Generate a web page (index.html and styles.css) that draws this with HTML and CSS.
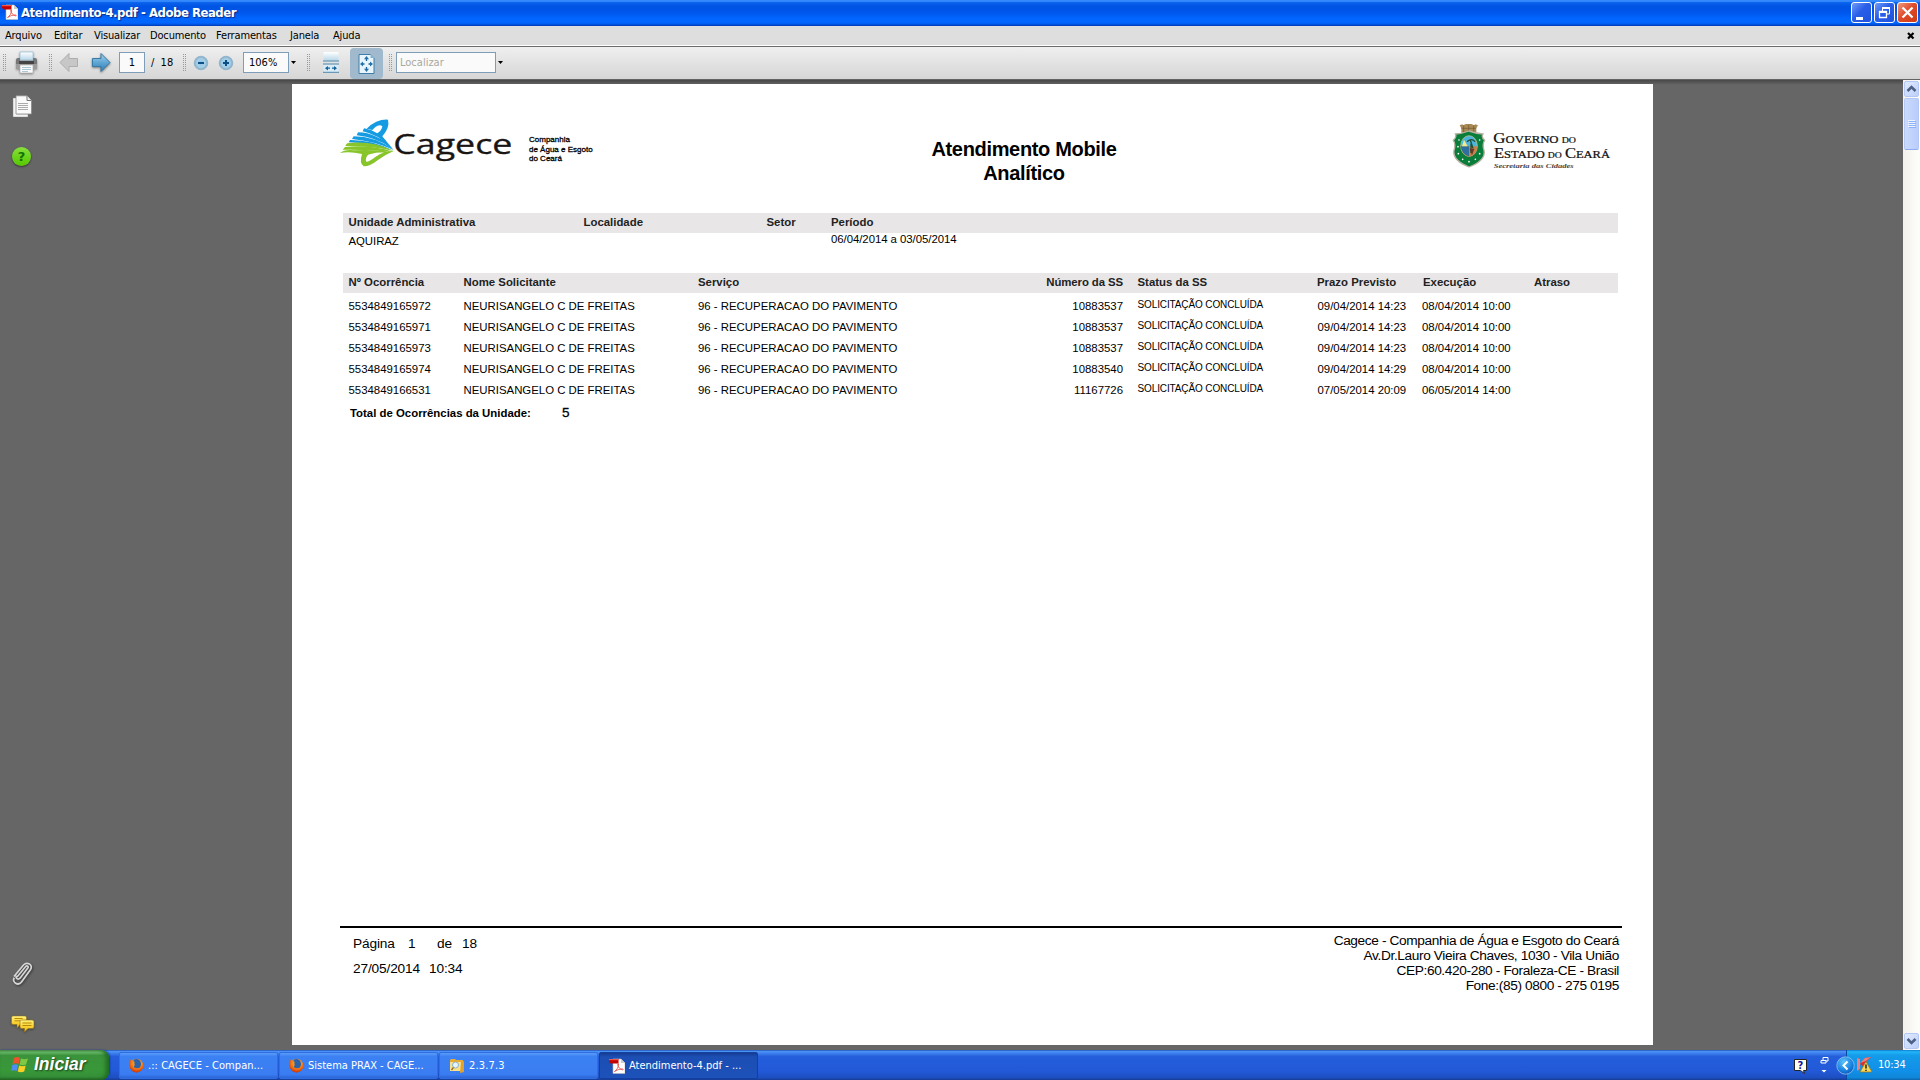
FILE: index.html
```html
<!DOCTYPE html>
<html lang="pt-BR">
<head>
<meta charset="utf-8">
<title>Atendimento-4.pdf - Adobe Reader</title>
<link rel="stylesheet" href="styles.css">
</head>
<body>
<svg width="0" height="0" class="defs">
  <defs>
    <linearGradient id="arrow" x1="0" y1="0" x2="0" y2="1"><stop offset="0" stop-color="#a9d3ec"/><stop offset=".5" stop-color="#5fa6d3"/><stop offset="1" stop-color="#2f7db4"/></linearGradient>
    <linearGradient id="paper" x1="0" y1="0" x2="0" y2="1"><stop offset="0" stop-color="#fff"/><stop offset="1" stop-color="#b9d7e8"/></linearGradient>
    <radialGradient id="zoomball" cx=".5" cy=".5" r=".5"><stop offset="0" stop-color="#8cc4e8"/><stop offset=".6" stop-color="#a8d0e8"/><stop offset="1" stop-color="#7fa9c4"/></radialGradient>
    <linearGradient id="note" x1="0" y1="0" x2="0" y2="1"><stop offset="0" stop-color="#fff27a"/><stop offset="1" stop-color="#f4b400"/></linearGradient>
    <radialGradient id="fox" cx=".55" cy=".3" r=".7"><stop offset="0" stop-color="#ffc23a"/><stop offset=".6" stop-color="#f37a16"/><stop offset="1" stop-color="#c93409"/></radialGradient>
    <radialGradient id="trayball" cx=".4" cy=".3" r=".8"><stop offset="0" stop-color="#5cc4fb"/><stop offset=".6" stop-color="#1a83e0"/><stop offset="1" stop-color="#0a4bb0"/></radialGradient>
    <symbol id="pdf" viewBox="0 0 16 16"><path d="M4 1h8l4 4v10.500H4z" fill="#fff" stroke="#bbb" stroke-width=".6"/><path d="M12 1v4h4z" fill="#ccc"/><path d="M5.500 13.500c2-1 4.500-5 4-7.500-.8-1-1.300.6 0 2.800s3.500 3.500 4.700 2.900c.7-1.300-4.500-1-8.700 1.800z" fill="none" stroke="#e8625c"/><path d="M0 1h9.500v4.500H2L0 4z" fill="#c40000"/><path d="M0 1h9.500v1.200H0z" fill="#ee5a50"/></symbol>
    <symbol id="firefox" viewBox="0 0 15 15"><circle cx="7.500" cy="7.500" r="6.800" fill="url(#fox)"/><path d="M5 1.500c3-1.500 7 .3 7 4.500 0 3-2 4.500-4 4.500S4 9 4 7l2-1-2-1.500z" fill="#2b62a8"/><path d="M1 3l1-2 2 2.200 2 .8-1.500 1.500L6 7C4 8 5 10.500 8 10.500c3.500 0 5-3 5.500-6C16 10 12 14.500 7.500 14.500 2 14.500-.5 9 1 3z" fill="url(#fox)"/></symbol>
  </defs>
</svg>
<div class="screen">
  <header class="titlebar">
    <svg class="title-icon" width="16" height="16"><use href="#pdf"/></svg>
    <h1 class="title"><span>Atendimento-4.pdf - Adobe Reader</span></h1>
    <div class="window-buttons">
      <button class="wb"><svg width="21" height="21"><path d="M5 15h7v3H5z" fill="#fff"/></svg></button>
      <button class="wb"><svg width="21" height="21"><path d="M8.500 9V5.500h7V12H13" fill="none" stroke="#fff"/><path d="M8 5h8v2H8z" fill="#fff"/><path d="M5.500 9.500h7v6h-7z" fill="none" stroke="#fff" stroke-width="1.300"/><path d="M5 9h8v2H5z" fill="#fff"/></svg></button>
      <button class="wb close"><svg width="21" height="21"><path d="M5.500 5.500l10 10m0-10l-10 10" stroke="#fff" stroke-width="2.300"/></svg></button>
    </div>
  </header>
  <nav class="menubar">
    <span class="m1">Arquivo</span><span class="m2">Editar</span><span class="m3">Visualizar</span><span class="m4">Documento</span><span class="m5">Ferramentas</span><span class="m6">Janela</span><span class="m7">Ajuda</span>
    <svg class="menu-close" width="8" height="8"><path d="M1 1l5.500 5.500m0-5.500L1 6.500" stroke="#000" stroke-width="2.200"/></svg>
  </nav>
  <div class="toolbar">
    <i class="grip"></i>
    <svg class="print" width="23" height="24" viewBox="0 0 23 24"><path d="M5 1h13v8H5z" fill="url(#paper)" stroke="#9fc3d8" stroke-width=".8"/><path d="M1 9q0-2 2-2h2v3h13V7h2q2 0 2 2v9H1z" fill="#777"/><path d="M1 13h21v5H1z" fill="#9b9b9b"/><path d="M4 10h15v3H4z" fill="#444"/><path d="M5 14h13v8H5z" fill="#fafafa" stroke="#aaa" stroke-width=".6"/><path d="M7 16.500h9M7 18.500h9M7 20.500h6" stroke="#a9c6d6"/></svg>
    <i class="grip"></i>
    <svg class="back" width="20" height="21" viewBox="0 0 20 21"><path d="M1 10.500L10 1.500v5h8.500v8H10v5z" fill="#c7c7c7" stroke="#adadad"/></svg>
    <svg class="forward" width="20" height="21" viewBox="0 0 20 21"><path d="M19 10.500L10 1.500v5H1.500v8H10v5z" fill="url(#arrow)" stroke="#367aa8"/></svg>
    <span class="field page-number">1</span>
    <span class="page-count">/&nbsp; 18</span>
    <i class="grip"></i>
    <svg class="minus" width="16" height="16"><circle cx="8" cy="8" r="6.800" fill="url(#zoomball)" stroke="#8fb0c6" stroke-width=".8"/><path d="M5 7h6v2H5z" fill="#0d4f87"/></svg>
    <svg class="plus" width="16" height="16"><circle cx="8" cy="8" r="6.800" fill="url(#zoomball)" stroke="#8fb0c6" stroke-width=".8"/><path d="M5 7h2V5h2v2h2v2H9v2H7V9H5z" fill="#0d4f87"/></svg>
    <span class="field zoom">106%</span>
    <i class="caret"></i>
    <i class="grip"></i>
    <svg class="fit-width" width="16" height="21" viewBox="0 0 16 21"><path d="M.5 0h15v8.500H.5z" fill="url(#paper)"/><path d="M0 9h16" stroke="#4d87ad"/><path d="M.5 12.500h15V20H.5z" fill="#d9ebf5"/><path d="M0 12h16M0 20.300h16" stroke="#4d87ad"/><path d="M3 16.200h4m2 0h4" stroke="#15639c" stroke-width="1.300"/><path d="M5 14L2 16.200 5 18.500zM11 14l3 2.200-3 2.300z" fill="#15639c"/></svg>
    <span class="pressed"><svg width="17" height="20" viewBox="0 0 17 20"><path d="M1 .5h11.500L16 4v15.500H1z" fill="#e9f5fc" stroke="#3f7ea8"/><path d="M12.500 0v4H17" fill="#84b3d0"/><path d="M8.500 4v3m0 6v3M3.500 10h3m4 0h3" stroke="#15639c" stroke-width="1.300"/><path d="M6 5.200L8.500 2 11 5.200zM6 14.800L8.500 18l2.500-3.200zM5 7.500L2 10l3 2.500zM12 7.500l3 2.500-3 2.500z" fill="#2471a8"/></svg></span>
    <i class="grip"></i>
    <span class="field search">Localizar</span>
    <i class="caret"></i>
  </div>
  <main class="workspace">
    <aside class="sidebar">
      <svg class="pages" width="22" height="24" viewBox="0 0 22 24"><path d="M1 3h4v16h11v3H1z" fill="#f4f4f4" stroke="#777" stroke-width=".4"/><path d="M4 .8h11l4.500 4.700V19H4z" fill="#fafafa" stroke="#888" stroke-width=".8"/><path d="M15 .8v4.700h4.500" fill="#eee" stroke="#777"/><path d="M6 8.500h10M6 10.500h10M6 12.500h10M6 14.500h10" stroke="#aaa"/></svg>
      <span class="help">?</span>
      <svg class="clip" width="22" height="24" viewBox="0 0 22 24"><path d="M5 15L13.500 4.700c1.500-1.700 3.500-.2 2.300 1.400L8 16.200c-2 2-5 0-3.300-2.500M2 14.500L11.500 3C15-.5 21.500 2.500 18.500 7.500L9.500 20C6 24.500-.5 20 2.300 15.800" fill="none" stroke="#d7d7d7" stroke-width="1.700"/></svg>
      <svg class="notes" width="24" height="18" viewBox="0 0 24 18"><path d="M2 1h12q1.500 0 1.500 1.500V8q0 1.500-1.500 1.500H9L6 13V9.500H2Q.5 9.500.5 8V2.500Q.5 1 2 1z" fill="url(#note)" stroke="#8c7220" stroke-width=".5"/><path d="M3.500 3.500h8m-8 2.300h6" stroke="#b98900"/><path d="M10.500 5H21q2 0 2 1.500v5.500q0 1.500-2 1.500h-4L13.500 17v-3.500h-3Q9 13.500 9 12V6.500Q9 5 10.500 5z" fill="url(#note)" stroke="#8c7220" stroke-width=".6"/><path d="M11.500 8h9m-9 2.500h9" stroke="#b98900"/></svg>
    </aside>
    <article class="page">
      <div class="page-head">
        <svg class="cagece" width="173" height="52" viewBox="30 52 519 156" role="img">
          <g fill="#159be2">
            <path d="M110 84Q140 55 174 57Q180 80 157 107Q170 128 191 148Q163 133 140 99Q156 90 157 77Q149 69 136 79L127 88z"/>
            <path d="M102 83Q145 88 182 137Q140 101 98 92z"/>
            <path d="M84 95Q140 96 187 143Q135 109 80 104z"/>
            <path d="M71 107Q135 107 190 147Q130 121 66 115z"/>
            <path d="M60 118Q125 117 188 149Q125 127 56 125z"/>
          </g>
          <g fill="#88c52a">
            <path d="M51 128Q125 118 191 151Q120 135 46 136z"/>
            <path d="M45 139Q120 130 189 153Q115 147 62 147L38 147z"/>
            <path d="M30 157Q44 145 74 149Q140 146 185 155Q140 153 114 162Q104 175 109 183Q116 184 137 168Q160 151 191 151Q168 161 145 177Q118 198 101 197Q87 188 96 160Q58 151 30 157z"/>
          </g>
          <text x="190" y="159" textLength="357" lengthAdjust="spacingAndGlyphs" class="brand">Cagece</text>
        </svg>
        <p class="company">Companhia<br>de Água e Esgoto<br>do Ceará</p>
        <h2 class="report-title">Atendimento Mobile<br>Analítico</h2>
        <svg class="gov" width="160" height="50" viewBox="95 65 480 150" role="img">
          <path d="M118 75l8-3 3 3 7-4 9 0 9 0 7 4 4-3 8 3-5 9v13h-45V84z" fill="#a98a55"/><path d="M123 84h44M130 75v20m15-22v22m15-20v20" stroke="#6e5733" stroke-width="2"/>
          <path d="M105 101Q125 100 146 92Q168 100 188 101Q182 110 193 120Q185 130 191 150Q197 180 146 200Q96 180 101 150Q107 130 99 120Q110 110 105 101z" fill="#0a7d3b" stroke="#b8b2a2" stroke-width="4"/>
          <ellipse cx="146" cy="137" rx="25" ry="31" fill="#49b5df" stroke="#d5c98a" stroke-width="2"/>
          <path d="M121 138h50q-2 30-25 31q-22-3-25-31z" fill="#c8824b"/><path d="M121 138h25v30q-20-3-25-30z" fill="#2d6f9d"/><path d="M150 119l8 25m-18-20q14-12 24 0m-12 6v28" stroke="#254e2d" stroke-width="4" fill="none"/><path d="M131 118l11 20h-17z" fill="#f5e98a"/><path d="M148 145l14 0-7 20z" fill="#68372b"/>
          <g fill="#fff"><circle cx="116" cy="119" r="2.500"/><circle cx="113" cy="139" r="2.500"/><circle cx="114" cy="160" r="2.500"/><circle cx="127" cy="177" r="2.500"/><circle cx="146" cy="184" r="2.500"/><circle cx="165" cy="177" r="2.500"/><circle cx="178" cy="160" r="2.500"/><circle cx="178" cy="119" r="2.500"/></g>
          <g class="gov-text"><text x="219" y="129" textLength="248" lengthAdjust="spacingAndGlyphs"><tspan class="cap">G</tspan>OVERNO <tspan class="mini">DO</tspan></text>
          <text x="221" y="172" textLength="348" lengthAdjust="spacingAndGlyphs"><tspan class="cap">E</tspan>STADO <tspan class="mini">DO</tspan> <tspan class="cap">C</tspan>EARÁ</text></g>
          <text x="220" y="204" textLength="240" lengthAdjust="spacingAndGlyphs" class="office">Secretaria das Cidades</text>
        </svg>
      </div>
      <div class="band unit-cols"><span>Unidade Administrativa</span><span>Localidade</span><span>Setor</span><span>Período</span></div>
      <div class="unit-cols unit-values"><span>AQUIRAZ</span><span></span><span></span><span class="period">06/04/2014 a 03/05/2014</span></div>
      <div class="band cols"><span>Nº Ocorrência</span><span>Nome Solicitante</span><span>Serviço</span><span class="right">Número da SS</span><span class="status-head">Status da SS</span><span>Prazo Previsto</span><span class="exec-head">Execução</span><span>Atraso</span></div>
      <div class="rows">
        <div class="cols"><span>5534849165972</span><span>NEURISANGELO C DE FREITAS</span><span class="service">96 - RECUPERACAO DO PAVIMENTO</span><span class="right">10883537</span><span class="status">SOLICITAÇÃO CONCLUÍDA</span><span class="due">09/04/2014 14:23</span><span>08/04/2014 10:00</span></div>
        <div class="cols"><span>5534849165971</span><span>NEURISANGELO C DE FREITAS</span><span class="service">96 - RECUPERACAO DO PAVIMENTO</span><span class="right">10883537</span><span class="status">SOLICITAÇÃO CONCLUÍDA</span><span class="due">09/04/2014 14:23</span><span>08/04/2014 10:00</span></div>
        <div class="cols"><span>5534849165973</span><span>NEURISANGELO C DE FREITAS</span><span class="service">96 - RECUPERACAO DO PAVIMENTO</span><span class="right">10883537</span><span class="status">SOLICITAÇÃO CONCLUÍDA</span><span class="due">09/04/2014 14:23</span><span>08/04/2014 10:00</span></div>
        <div class="cols"><span>5534849165974</span><span>NEURISANGELO C DE FREITAS</span><span class="service">96 - RECUPERACAO DO PAVIMENTO</span><span class="right">10883540</span><span class="status">SOLICITAÇÃO CONCLUÍDA</span><span class="due">09/04/2014 14:29</span><span>08/04/2014 10:00</span></div>
        <div class="cols"><span>5534849166531</span><span>NEURISANGELO C DE FREITAS</span><span class="service">96 - RECUPERACAO DO PAVIMENTO</span><span class="right">11167726</span><span class="status">SOLICITAÇÃO CONCLUÍDA</span><span class="due">07/05/2014 20:09</span><span>06/05/2014 14:00</span></div>
      </div>
      <p class="total"><span>Total de Ocorrências da Unidade:</span><b>5</b></p>
      <footer class="page-foot">
        <div class="foot-left">
          <p class="foot-page"><span>Página</span><span>1</span><span>de</span><span>18</span></p>
          <p class="foot-date"><span>27/05/2014</span><span>10:34</span></p>
        </div>
        <p class="foot-right">Cagece - Companhia de Água e Esgoto do Ceará<br>Av.Dr.Lauro Vieira Chaves, 1030 - Vila União<br>CEP:60.420-280 - Foraleza-CE - Brasil<br>Fone:(85) 0800 - 275 0195</p>
      </footer>
    </article>
    <div class="scrollbar">
      <span class="sb-btn"><svg width="13" height="14"><path d="M2.500 9l4-4 4 4" fill="none" stroke="#4d6185" stroke-width="2.600"/></svg></span>
      <span class="thumb"><svg width="8" height="9"><path d="M0 .5h7m-7 2h7m-7 2h7m-7 2h7" stroke="#eef4fe"/><path d="M1 1.500h7m-7 2h7m-7 2h7m-7 2h7" stroke="#8cb0f8"/></svg></span>
      <span class="sb-btn down"><svg width="13" height="14"><path d="M2.500 5l4 4 4-4" fill="none" stroke="#4d6185" stroke-width="2.600"/></svg></span>
    </div>
  </main>
  <footer class="taskbar">
    <div class="start"><svg width="18" height="18" viewBox="0 0 18 18"><path d="M3 2q3-2 6 0L7.500 8q-3-1.500-6 0z" fill="#f0522b"/><path d="M10 2.500q3 1.500 7 0L15 8.500q-3.500 1.500-6.500 0z" fill="#7fc843"/><path d="M1.200 9q3-1.500 6 0l-1.500 6q-3-1.500-5.500 0z" fill="#4f8df0"/><path d="M8.200 9.500q3.500 1.500 6.500 0l-1.500 6q-3.500 1.500-6.500 0z" fill="#fbd024"/></svg><span>Iniciar</span></div>
    <div class="task"><svg width="15" height="15"><use href="#firefox"/></svg><span class="t1">.:: CAGECE - Compan...</span></div>
    <div class="task"><svg width="15" height="15"><use href="#firefox"/></svg><span class="t2">Sistema PRAX - CAGE...</span></div>
    <div class="task"><svg width="16" height="15" viewBox="0 0 16 15"><path d="M1 2l1-1h4l1 1h7v10H1z" fill="#e7ac33"/><path d="M1 4h13v9H1z" fill="#fbe08a"/><path d="M12 4l3-1v11l-4 1z" fill="#e2a12a"/><circle cx="6.500" cy="7" r="3" fill="#e5f5fd" stroke="#8db2c9"/><path d="M4.500 9.500L2.500 12" stroke="#936b21" stroke-width="1.300"/></svg><span class="t3">2.3.7.3</span></div>
    <div class="task active"><svg width="16" height="16"><use href="#pdf"/></svg><span class="t4">Atendimento-4.pdf - ...</span></div>
    <div class="tray-left">
      <svg width="14" height="15" viewBox="0 0 14 15"><path d="M.5.500h12v11h-3l1 3-4-3h-6z" fill="#fffff0" stroke="#222"/><text x="3.500" y="10" class="q">?</text></svg>
      <svg class="restore" width="10" height="18" viewBox="0 0 10 18"><path d="M3 4V1.500h5V5H6M1 4.500h5V7H1z" fill="none" stroke="#fff"/><path d="M1.500 14h5L4 16.500z" fill="#fff"/></svg>
    </div>
    <div class="tray">
      <svg class="expand" width="19" height="19"><circle cx="9.500" cy="9.500" r="8.700" fill="url(#trayball)" stroke="#93c8f3" stroke-width=".8"/><path d="M11.500 5.500l-4 4 4 4" fill="none" stroke="#fff" stroke-width="2"/></svg>
      <svg class="av" width="16" height="16" viewBox="0 0 16 16"><path d="M1 1l3 1v10l-3 2zM4 7L9 1l6-1-7 7 4 6z" fill="#e32b28"/><path d="M1 1l3 1v10l-3 2zM4 6L9 1l6-1-5 4z" fill="#ef7f7a"/><path d="M10 4.500L16 15H4z" fill="#f6d557" stroke="#9b7712" stroke-width=".7"/><path d="M10 7.500v4m0 1.300V14" stroke="#222" stroke-width="1.500"/></svg>
      <time>10:34</time>
    </div>
  </footer>
</div>
</body>
</html>
```
FILE: styles.css
```css
* { box-sizing: border-box; }
body { margin: 0; overflow: hidden; font-family: "DejaVu Sans Condensed", "DejaVu Sans", sans-serif; font-size: 11px; color: #000; }
.defs { position: absolute; }
h1, h2, p { margin: 0; }
svg { display: block; flex: none; }
span, time { white-space: nowrap; }
.screen { width: 1920px; height: 1080px; display: grid; grid-template-rows: 26px 21px 33px 970px 30px; }

.titlebar { display: flex; align-items: center; padding: 0 2px 0 2px; background: linear-gradient(#2a82f8 0, #3f93ff 4%, #0a62ec 10%, #0054e3 25%, #0055ea 45%, #0066ff 72%, #0066ff 88%, #004fd8 95%, #0038b5 100%); }
.title-icon { margin-top: -3px; }
.title { margin-left: 3px; flex: 1; font-family: "DejaVu Sans Condensed", sans-serif; font-size: 13px; line-height: 28px; letter-spacing: -.48px; color: #fff; text-shadow: 1px 1px 1px #0a2d86; }
.window-buttons { display: flex; gap: 2px; margin-top: -1px; }
.wb { width: 21px; height: 21px; padding: 0; border: 1px solid #fff; border-radius: 3px; background: linear-gradient(135deg, #6f9cf8, #2a5de8 45%, #1f52dd); }
.wb svg { margin: -1px; }
.wb.close { background: linear-gradient(135deg, #f09a80, #df4d2b 45%, #d13a14); }

.menubar { display: flex; padding-left: 5px; background: #dedede; border-bottom: 1px solid #6b6b6b; box-shadow: inset 0 -1px #fff; line-height: 19px; letter-spacing: -.15px; }
.m1 { width: 49px; } .m2 { width: 40px; } .m3 { width: 56px; } .m4 { width: 66px; } .m5 { width: 74px; } .m6 { width: 43px; } .m7 { flex: 1; }
.menu-close { margin: 6px 5px 0 0; }

.toolbar { display: flex; align-items: center; padding-left: 3px; padding-bottom: 1px; background: linear-gradient(#efefef, #d6d6d6); border-bottom: 1px solid #636363; }
.grip { flex: none; width: 3px; height: 17px; background: repeating-linear-gradient(#999 0 1px, transparent 1px 2px) 0 0 / 1px 100% no-repeat, repeating-linear-gradient(#999 0 1px, transparent 1px 2px) 2px 0 / 1px 100% no-repeat; }
.print { margin: 0 11px 0 9px; filter: drop-shadow(0 1px 1px #888); }
.back { margin: 0 12px 0 7px; }
.forward { margin-right: 8px; filter: drop-shadow(0 1px 1px #777); }
.field { height: 21px; flex: none; border: 1px solid #7f9db9; background: #fafafa; font-size: 11px; line-height: 19px; }
.page-number { width: 26px; text-align: center; }
.page-count { margin-left: 6px; width: 32px; }
.minus { margin-left: 7px; } .plus { margin-left: 9px; }
.zoom { width: 46px; margin-left: 9px; padding-left: 5px; }
.caret { flex: none; width: 5px; height: 3px; margin-left: 2px; background: #000; clip-path: polygon(0 0, 100% 0, 50% 100%); }
.caret + .grip { margin-left: 11px; }
.fit-width { margin-left: 13px; }
.pressed { display: grid; place-items: center; width: 33px; height: 31px; margin: 1px 6px 0 11px; padding-top: 1px; border-radius: 4px; background: #a0b9cc; }
.search { width: 100px; margin-left: 4px; padding-left: 3px; color: #a9a89c; }

.workspace { display: grid; grid-template-columns: 292px 1361px 1fr 17px; background: linear-gradient(#484848, #666 5px); }
.sidebar { display: flex; flex-direction: column; padding-left: 12px; }
.pages { margin: 15px 0 0; }
.help { width: 19px; height: 19px; margin-top: 28px; border-radius: 50%; background: linear-gradient(#86e03c, #55c800); box-shadow: 0 1px 2px #333; font: bold 13px/19px "DejaVu Sans", sans-serif; text-align: center; color: #117000; }
.clip { margin-top: 796px; filter: drop-shadow(1px 1px 1px #333); }
.notes { margin: 29px 0 0 -1px; filter: drop-shadow(0 1px 1px #444); }

.page { display: flex; flex-direction: column; height: 961px; margin-top: 4px; padding: 34px 31px 0 48px; background: #fff; font-family: "Liberation Sans", Arial, sans-serif; font-size: 11.400px; }
.page-head { display: flex; height: 95px; }
.brand { font-family: "Open Sans", sans-serif; font-size: 82px; fill: #191514; stroke: #191514; stroke-width: 1; }
.company { margin: 17px 0 0 16px; font-size: 8px; line-height: 9.500px; width: 130px; -webkit-text-stroke: .3px #000; }
.report-title { width: 730px; margin-top: 19px; font-size: 20px; line-height: 24px; letter-spacing: -.33px; text-align: center; }
.gov { margin: 4px 0 0 63px; }
.gov-text { font-family: "Liberation Serif", serif; font-size: 31px; fill: #111; stroke: #111; stroke-width: .7; }
.cap { font-size: 41px; } .mini { font-size: 24px; }
.office { font: italic bold 20px "Liberation Serif", serif; fill: #444; }
.band { flex: none; width: 1275px; height: 20px; margin-left: 3px; background: #e8e6e7; font-size: 11.400px; line-height: 19px; font-weight: bold; color: #222; }
.unit-cols { display: grid; grid-template-columns: 235px 183px 64.500px 1fr; padding-left: 5.500px; letter-spacing: 0; }
.unit-values { height: 40px; margin-left: 3px; line-height: 17px; letter-spacing: -.05px; }
.period { margin-top: -2px; }
.cols { display: grid; grid-template-columns: 115px 234.500px 300px 125px 194px 105px 112px 1fr; padding-left: 5.500px; }
.right { text-align: right; }
.band .right { letter-spacing: -.1px; }
.cols .status, .cols .status-head { padding-left: 14.500px; }
.rows { padding: 3px 0 0 3px; }
.rows .cols { height: 21px; line-height: 21px; }
.cols .status { font-size: 10px; line-height: 17px; letter-spacing: -.12px; }
.due { padding-left: .5px; }
.exec-head { padding-left: 1px; }
.total { display: flex; margin-left: 10px; height: 24px; line-height: 24px; font-weight: bold; }
.total span { width: 212px; } .total b { font-size: 13.500px; font-weight: normal; -webkit-text-stroke: .3px #000; }
.page-foot { display: flex; justify-content: space-between; width: 1282px; height: 90px; margin: auto 0 29px; border-top: 2px solid #000; padding: 5px 3px 0 13px; font-size: 13.700px; line-height: 15px; }
.foot-left { padding-top: 3px; letter-spacing: -.15px; }
.foot-page { display: grid; grid-template-columns: 55px 29px 25px 40px; height: 25px; }
.foot-date { display: grid; grid-template-columns: 76px 50px; }
.foot-right { text-align: right; letter-spacing: -.38px; }

.scrollbar { grid-column: 4; display: flex; flex-direction: column; align-items: center; background: linear-gradient(90deg, #f3f1ec, #fefefb); padding: 1px 1px 0; }
.sb-btn, .thumb { display: grid; place-items: center; flex: none; width: 15px; height: 16px; border: 1px solid #b4c8f6; border-radius: 2px; background: linear-gradient(135deg, #e1eafe, #bccffb); }
.thumb { height: 52px; margin-top: 1px; border-bottom-color: #8caef0; background: linear-gradient(90deg, #cbdafd, #b9cdfb); }
.down { margin-top: auto; margin-bottom: 1px; }

.taskbar { display: flex; background: linear-gradient(#1f52b8 0, #4b92f5 5%, #3a7ceb 12%, #245edb 22%, #2259d8 70%, #1d4fc0 92%, #153b95 100%); color: #fff; }
.start { display: flex; align-items: center; gap: 5px; width: 109px; padding: 0 0 1px 11px; border-radius: 0 8px 8px 0; background: linear-gradient(#5f9e5f 0, #6fc06f 7%, #3b923c 18%, #389838 65%, #36903a 90%, #246224 100%); box-shadow: inset -3px 0 4px #1e6a20, 1px 0 2px #143f9a; font: italic bold 17.500px "Liberation Sans", sans-serif; text-shadow: 1px 1px 2px #1b3d1b; }
.task { display: flex; align-items: center; gap: 4px; width: 159px; height: 27px; margin: 2px 1px 0 0; padding-left: 9px; border-radius: 2px; border: 1px solid #2f6de0; background: linear-gradient(#5a9bfb, #3c81f3 14%, #3a7df2 85%, #2b66d6); font-size: 11px; }
.t1 { letter-spacing: .05px; } .t3 { letter-spacing: .15px; }
.start + .task { margin-left: 10px; }
.task.active { background: linear-gradient(#153c93, #1c4eb3 15%, #1d52ba); border-color: #153f9c; }
.tray-left { display: flex; gap: 12px; margin-left: auto; padding: 9px 16px 0 0; }
.restore { margin-top: -3px; }
.q { font: bold 10px "DejaVu Sans", sans-serif; fill: #14149b; }
.tray { display: flex; align-items: center; width: 74px; border-left: 1px solid #0b4a9e; background: linear-gradient(#0e7bd0 0, #21b5f7 6%, #149be9 18%, #118fe8 70%, #0f86d8 92%, #0b62ae 100%); line-height: 30px; letter-spacing: -.2px; }
.expand { margin-left: -11px; }
.av { margin: 0 6px 0 1px; }
```
